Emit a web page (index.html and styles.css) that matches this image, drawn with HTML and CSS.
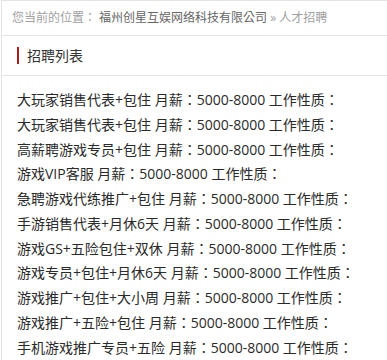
FILE: index.html
```html
<!DOCTYPE html>
<html>
<head>
    <meta charset="utf-8">
    <title>人才招聘</title>
    <link rel="stylesheet" href="styles.css">
</head>
<body>
    <section id="mainwrapper">
        <div class="crumb">
            您当前的位置：<a href="#">福州创星互娱网络科技有限公司</a> » 人才招聘
        </div>
        <div class="boxtitle">
            <span class="mark"></span>招聘列表
        </div>
        <ul class="joblist">
            <li>大玩家销售代表+包住 月薪：5000-8000 工作性质：</li>
            <li>大玩家销售代表+包住 月薪：5000-8000 工作性质：</li>
            <li>高薪聘游戏专员+包住 月薪：5000-8000 工作性质：</li>
            <li>游戏VIP客服 月薪：5000-8000 工作性质：</li>
            <li>急聘游戏代练推广+包住 月薪：5000-8000 工作性质：</li>
            <li>手游销售代表+月休6天 月薪：5000-8000 工作性质：</li>
            <li>游戏GS+五险包住+双休 月薪：5000-8000 工作性质：</li>
            <li>游戏专员+包住+月休6天 月薪：5000-8000 工作性质：</li>
            <li>游戏推广+包住+大小周 月薪：5000-8000 工作性质：</li>
            <li>游戏推广+五险+包住 月薪：5000-8000 工作性质：</li>
            <li>手机游戏推广专员+五险 月薪：5000-8000 工作性质：</li>
        </ul>
    </section>
</body>
</html>
```

FILE: styles.css
```css
html, body {
    margin: 0;
    padding: 0;
    overflow: hidden;
    background: #fff;
}
body {
    font-family: "Open Sans", "Noto Sans CJK TC", sans-serif;
}
#mainwrapper {
    margin-left: 1px;
    border-left: 1px solid #e3e3e3;
    border-top: 1px solid #e3e3e3;
    overflow: hidden;
}
.crumb {
    height: 34px;
    line-height: 34px;
    padding-left: 10px;
    font-size: 12px;
    color: #a0a0a0;
    border-bottom: 1px solid #e3e3e3;
    white-space: nowrap;
}
.crumb a {
    color: #666;
    text-decoration: none;
    margin-left: 3px;
}
.boxtitle {
    height: 39px;
    line-height: 39px;
    padding-left: 15px;
    font-size: 14px;
    color: #333;
    border-bottom: 1px solid #e3e3e3;
    display: flex;
    align-items: center;
}
.boxtitle .mark {
    width: 2px;
    height: 17px;
    background: #a81c1c;
    margin-right: 8px;
}
.joblist {
    list-style: none;
    margin: 0;
    padding: 12px 0 0 15px;
}
.joblist li {
    line-height: 24.75px;
    font-size: 14px;
    color: #2a2a2a;
    white-space: nowrap;
}
```
